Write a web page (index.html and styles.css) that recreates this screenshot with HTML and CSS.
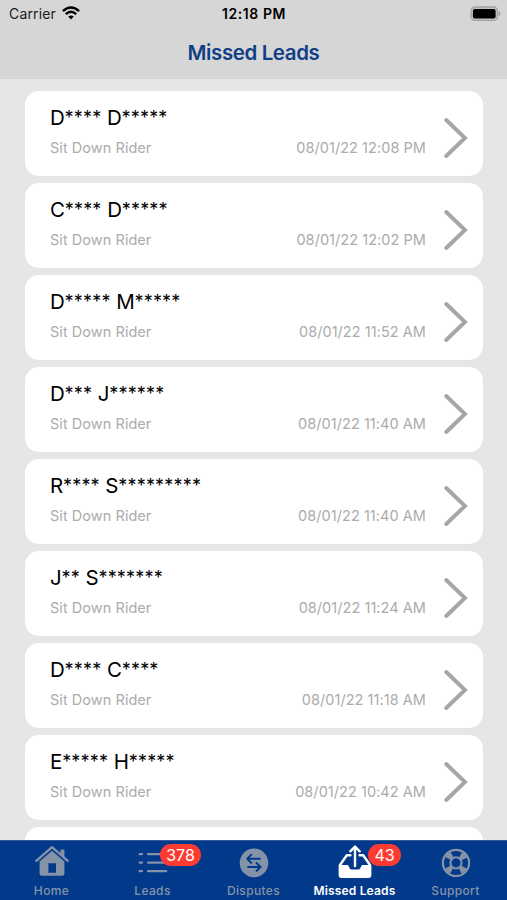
FILE: index.html
```html
<!DOCTYPE html>
<html lang="en">
<head>
<meta charset="utf-8">
<title>Missed Leads</title>
<link rel="stylesheet" href="styles.css">
</head>
<body>
<svg class="defs" aria-hidden="true"><symbol id="chevron" viewBox="0 0 24 42"><path d="M2.2 3 L21 21 L2.2 39" fill="none" stroke="#a6a6a6" stroke-width="3.9" stroke-linecap="round" stroke-linejoin="miter"/></symbol></svg>
<div class="screen">
  <header class="header">
    <div class="status">
      <div class="carrier"><span>Carrier</span>
        <svg class="wifi" width="18" height="14" viewBox="0 0 18 14"><g fill="none" stroke="#000" stroke-width="2.4"><path d="M.9 5.2 Q9 -2.4 17.1 5.2"/><path d="M3.8 8.2 Q9 3.4 14.2 8.2"/></g><path d="M6.2 10.6 Q9 8.2 11.8 10.6 L9 13.5Z"/></svg>
      </div>
      <span class="clock">12:18 PM</span>
      <svg class="battery" width="31" height="16" viewBox="0 0 31 16"><rect x="1" y="1" width="26.5" height="13.4" rx="4" fill="#c4c4c4" stroke="#a3a3a3" stroke-width="1.3"/><rect x="2.9" y="2.9" width="22.7" height="9.6" rx="2"/><path d="M28.8 5.2 Q30.6 6 30.6 7.7 T28.8 10.2Z" fill="#9b9b9b"/></svg>
    </div>
    <h1 class="title">Missed Leads</h1>
  </header>
  <main class="list">
    <article class="card"><div class="info"><h2>D<i>****</i> D<i>*****</i></h2><div class="meta"><span class="kind">Sit Down Rider</span><time>08/01/22 12:08 PM</time></div></div><svg class="chevron"><use href="#chevron"/></svg></article>
    <article class="card"><div class="info"><h2>C<i>****</i> D<i>*****</i></h2><div class="meta"><span class="kind">Sit Down Rider</span><time>08/01/22 12:02 PM</time></div></div><svg class="chevron"><use href="#chevron"/></svg></article>
    <article class="card"><div class="info"><h2>D<i>*****</i> M<i>*****</i></h2><div class="meta"><span class="kind">Sit Down Rider</span><time>08/01/22 11:52 AM</time></div></div><svg class="chevron"><use href="#chevron"/></svg></article>
    <article class="card"><div class="info"><h2>D<i>***</i> J<i>******</i></h2><div class="meta"><span class="kind">Sit Down Rider</span><time>08/01/22 11:40 AM</time></div></div><svg class="chevron"><use href="#chevron"/></svg></article>
    <article class="card"><div class="info"><h2>R<i>****</i> S<i>*********</i></h2><div class="meta"><span class="kind">Sit Down Rider</span><time>08/01/22 11:40 AM</time></div></div><svg class="chevron"><use href="#chevron"/></svg></article>
    <article class="card"><div class="info"><h2>J<i>**</i> S<i>*******</i></h2><div class="meta"><span class="kind">Sit Down Rider</span><time>08/01/22 11:24 AM</time></div></div><svg class="chevron"><use href="#chevron"/></svg></article>
    <article class="card"><div class="info"><h2>D<i>****</i> C<i>****</i></h2><div class="meta"><span class="kind">Sit Down Rider</span><time>08/01/22 11:18 AM</time></div></div><svg class="chevron"><use href="#chevron"/></svg></article>
    <article class="card"><div class="info"><h2>E<i>*****</i> H<i>*****</i></h2><div class="meta"><span class="kind">Sit Down Rider</span><time>08/01/22 10:42 AM</time></div></div><svg class="chevron"><use href="#chevron"/></svg></article>
    <article class="card"></article>
  </main>
  <nav class="tabs">
    <a class="tab">
      <svg width="34" height="32" viewBox="0 0 34 32"><path d="M1.3 15.8 L17 2.2 L32.7 15.8" fill="none" stroke="currentColor" stroke-width="2.4" stroke-linecap="round" stroke-linejoin="round"/><path d="M25.5 4.6h3.9v8l-3.9-3.4z" fill="currentColor"/><path fill-rule="evenodd" fill="currentColor" d="M17 5.8 L29.4 16.5V28.8a2 2 0 0 1-2 2H6.6a2 2 0 0 1-2-2V16.5Z M13.4 18.2v9.6h7.6v-9.6z"/></svg>
      <span>Home</span>
    </a>
    <a class="tab">
      <svg width="34" height="32" viewBox="0 0 34 32"><g fill="none" stroke="currentColor" stroke-width="2.3" stroke-linecap="round"><path d="M3.6 9.1h2.4M12 9.1h18.2M3.6 17.6h2.4M12 17.6h18.2M3.6 26.1h2.4M12 26.1h18.2"/></g></svg>
      <b class="badge wide">378</b>
      <span>Leads</span>
    </a>
    <a class="tab">
      <svg width="34" height="32" viewBox="0 0 34 32"><circle cx="17" cy="17.9" r="14.3" fill="currentColor"/><g fill="none" stroke="#03398a" stroke-width="1.9"><path d="M23.7 13.8H10.5M14.8 9.1L10.3 13.8L14.8 18.5M10.3 22H23.5M19 17.5L23.6 22L19 26.5"/></g></svg>
      <span>Disputes</span>
    </a>
    <a class="tab active">
      <svg width="34" height="32" viewBox="0 0 34 32"><path fill="currentColor" d="M.6 20H9.5C11 20 11.2 24.6 14 24.6h6C22.8 24.6 23 20 24.5 20H33.4v9.8a3.2 3.2 0 0 1-3.2 3.2H3.8A3.2 3.2 0 0 1 .6 29.8Z"/><g fill="none" stroke="currentColor" stroke-linecap="round" stroke-linejoin="round" stroke-width="2.4"><path d="M12.4 10.3H8.8L2 20M21.6 10.3H25.2L32 20"/><path d="M17 21V1.8M12.3 6.3L17 1.6L21.7 6.3"/></g></svg>
      <b class="badge">43</b>
      <span>Missed Leads</span>
    </a>
    <a class="tab">
      <svg width="34" height="32" viewBox="0 0 34 32"><g fill="none" stroke="currentColor"><circle cx="17" cy="17.9" r="13.1" stroke-width="2.2"/><circle cx="17" cy="17.9" r="5.6" stroke-width="2.1"/><circle cx="17" cy="17.9" r="9.3" stroke-width="6" stroke-dasharray="5.6 9.008" stroke-dashoffset="-4.5"/></g></svg>
      <span>Support</span>
    </a>
  </nav>
</div>
</body>
</html>
```
FILE: styles.css
```css
* { box-sizing: border-box; }
body { margin: 0; font-family: Inter, "Liberation Sans", sans-serif; color: #000; }
.defs { display: none; }
.screen { width: 507px; height: 900px; display: flex; flex-direction: column; overflow: hidden; background: #e6e6e6; }

.header { flex: none; height: 79px; background: #d6d6d6; }
.status { display: grid; grid-template-columns: 1fr auto 1fr; align-items: center; height: 27px; padding: 0 6px 0 9px; }
.carrier { display: flex; align-items: center; gap: 6px; font-size: 14px; letter-spacing: .15px; color: #1b1b1b; }
.carrier svg { margin-top: -1px; }
.clock { font-size: 14px; font-weight: 600; letter-spacing: .55px; margin-left: -2px; }
.battery { justify-self: end; }
.title { margin: 0; text-align: center; font-size: 20.5px; line-height: 52px; font-weight: 600; letter-spacing: -.4px; color: #103e87; }

.list { flex: 1; min-height: 0; overflow: hidden; display: flex; flex-direction: column; gap: 7px; padding: 12px 24.5px 0 25px; }
.card { flex: none; display: flex; align-items: center; height: 85px; padding: 0 14.5px 0 25px; border-radius: 14px; background: #fff; }
.info { flex: 1; padding-bottom: 4px; }
.card h2 { margin: 0; font-size: 20.5px; line-height: 26px; font-weight: 400; letter-spacing: -.2px; white-space: nowrap; }
.card i { font-style: normal; font-size: 18px; line-height: 1; letter-spacing: .18px; vertical-align: 1px; }
.meta { display: flex; justify-content: space-between; margin-top: 7px; font-size: 14.5px; line-height: 20px; letter-spacing: .05px; color: #ababab; white-space: nowrap; }
.chevron { width: 24px; height: 42px; margin-left: 18px; margin-top: 8px; }

.tabs { flex: none; display: grid; grid-template-columns: repeat(5, 101px); padding-left: 1px; height: 60px; background: #03398a; border-top: 1px solid #345c95; color: #8493a8; }
.tab { display: flex; position: relative; flex-direction: column; align-items: center; padding-top: 4px; font-size: 12px; line-height: 16px; font-weight: 500; letter-spacing: .35px; white-space: nowrap; }
.tab svg { overflow: visible; }
.tab span { margin-top: 6px; }
.active { color: #fff; font-weight: 600; letter-spacing: .15px; }
.badge { position: absolute; left: 64px; top: 3px; width: 33px; height: 22px; text-align: center; border-radius: 11px; background: #fe3b30; color: #fff; font-size: 16px; line-height: 22px; font-weight: 400; letter-spacing: 0; }
.badge.wide { left: 58px; width: 41px; }
```
